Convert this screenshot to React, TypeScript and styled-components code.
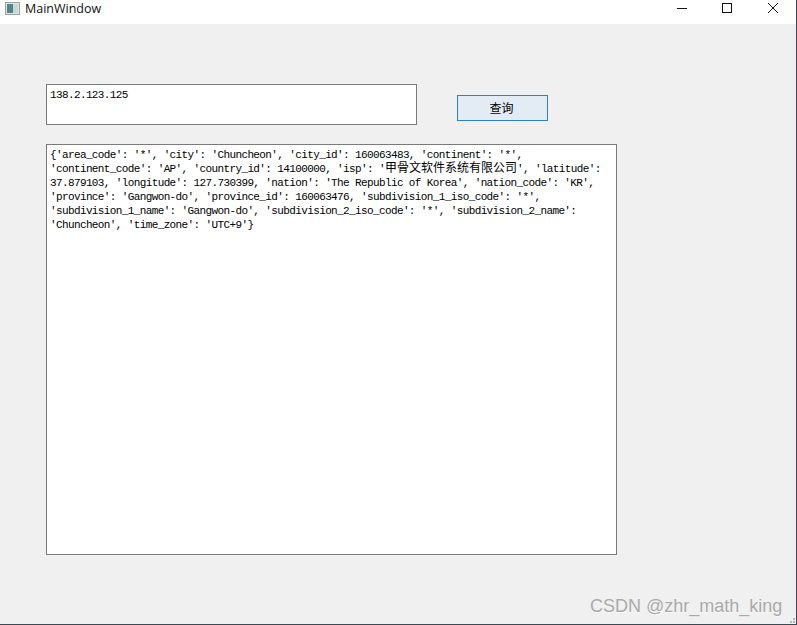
import React from "react";
import styled, { createGlobalStyle } from "styled-components";

const Global = createGlobalStyle`
  html, body { margin: 0; padding: 0; background: #f0f0f0; }
  * { box-sizing: border-box; }
`;

const Window = styled.div`
  position: relative;
  width: 797px;
  height: 625px;
  background: #f0f0f0;
  border-right: 1px solid #3a4a55;
  border-bottom: 1px solid #3a4a55;
  overflow: hidden;
  display: flex;
  flex-direction: column;
`;

const TitleBar = styled.div`
  height: 24px;
  flex: none;
  background: #fff;
  display: flex;
  align-items: center;
  padding-left: 5px;
`;

const AppIcon = styled.svg`
  width: 15px;
  height: 13px;
  flex: none;
  margin-top: -8px;
`;

const Title = styled.span`
  font: 12.5px "Open Sans", "Noto Sans", sans-serif;
  color: #111;
  margin-left: 5px;
  margin-top: -8px;
  flex: 1;
`;

const Controls = styled.div`
  display: flex;
  height: 100%;
  padding-right: 1px;
`;

const Control = styled.div`
  width: 45px;
  height: 16px;
  display: flex;
  align-items: center;
  justify-content: center;
`;

const Content = styled.div`
  flex: 1;
  padding: 60px 0 0 46px;
  display: flex;
  flex-direction: column;
  gap: 19px;
`;

const TopRow = styled.div`
  display: flex;
  align-items: flex-start;
  gap: 40px;
`;

const Field = styled.div`
  width: 371px;
  height: 41px;
  background: #fff;
  border: 1px solid #7a7a7a;
  padding: 3px;
  font: 11px/14px "Liberation Mono", monospace;
  letter-spacing: -0.62px;
  color: #000;
`;

const QueryButton = styled.button`
  width: 91px;
  height: 26px;
  margin-top: 11px;
  padding: 0 2px 2px 0;
  background: #e3ebf5;
  border: 1px solid #2b83c6;
  font: 12px "Noto Sans CJK SC", sans-serif;
  color: #000;
`;

const Output = styled.div`
  width: 571px;
  height: 411px;
  background: #fff;
  border: 1px solid #7a7a7a;
  padding: 3px;
`;

const Line = styled.div`
  height: 14px;
  font: 11px/14px "Liberation Mono", monospace;
  letter-spacing: -0.62px;
  color: #000;
  white-space: pre;
`;

const Cjk = styled.span`
  font: 12px/0 "Noto Sans CJK SC", sans-serif;
  letter-spacing: 0;
`;

const Watermark = styled.div`
  position: absolute;
  left: 590px;
  top: 595px;
  font: 18px/22px "Liberation Sans", Arial, sans-serif;
  color: #a9a9a9;
  text-shadow: 0 1px 0 #fafafa;
  white-space: nowrap;
`;

const Grip = styled.svg`
  position: absolute;
  right: 1px;
  bottom: 1px;
  width: 5px;
  height: 5px;
`;

export default function App() {
  return (
    <Window>
      <Global />
      <TitleBar>
        <AppIcon viewBox="0 0 15 13">
          <rect x="0.5" y="0.5" width="14" height="12" fill="#dfe6e6" stroke="#9aa2a6" />
          <rect x="2" y="2" width="6" height="9" fill="#55838a" />
          <rect x="8" y="2" width="5" height="9" fill="#cbd5d6" />
        </AppIcon>
        <Title>MainWindow</Title>
        <Controls>
          <Control>
            <svg width="11" height="11" viewBox="0 0 11 11">
              <path d="M0 5.5H10" stroke="#111" strokeWidth="1" />
            </svg>
          </Control>
          <Control>
            <svg width="11" height="11" viewBox="0 0 11 11">
              <rect x="0.5" y="0.5" width="9" height="9" fill="none" stroke="#111" strokeWidth="1" />
            </svg>
          </Control>
          <Control>
            <svg width="11" height="11" viewBox="0 0 11 11">
              <path d="M1 0L11 10M11 0L1 10" stroke="#111" strokeWidth="1" />
            </svg>
          </Control>
        </Controls>
      </TitleBar>
      <Content>
        <TopRow>
          <Field>138.2.123.125</Field>
          <QueryButton>查询</QueryButton>
        </TopRow>
        <Output>
          <Line>{"{'area_code': '*', 'city': 'Chuncheon', 'city_id': 160063483, 'continent': '*',"}</Line>
          <Line>
            {"'continent_code': 'AP', 'country_id': 14100000, 'isp': '"}
            <Cjk>甲骨文软件系统有限公司</Cjk>
            {"', 'latitude':"}
          </Line>
          <Line>{"37.879103, 'longitude': 127.730399, 'nation': 'The Republic of Korea', 'nation_code': 'KR',"}</Line>
          <Line>{"'province': 'Gangwon-do', 'province_id': 160063476, 'subdivision_1_iso_code': '*',"}</Line>
          <Line>{"'subdivision_1_name': 'Gangwon-do', 'subdivision_2_iso_code': '*', 'subdivision_2_name':"}</Line>
          <Line>{"'Chuncheon', 'time_zone': 'UTC+9'}"}</Line>
        </Output>
      </Content>
      <Watermark>CSDN @zhr_math_king</Watermark>
      <Grip viewBox="0 0 5 5">
        <path d="M3 0h2v2H3zM0 3h2v2H0zM3 3h2v2H3z" fill="#b5b5b5" />
      </Grip>
    </Window>
  );
}
